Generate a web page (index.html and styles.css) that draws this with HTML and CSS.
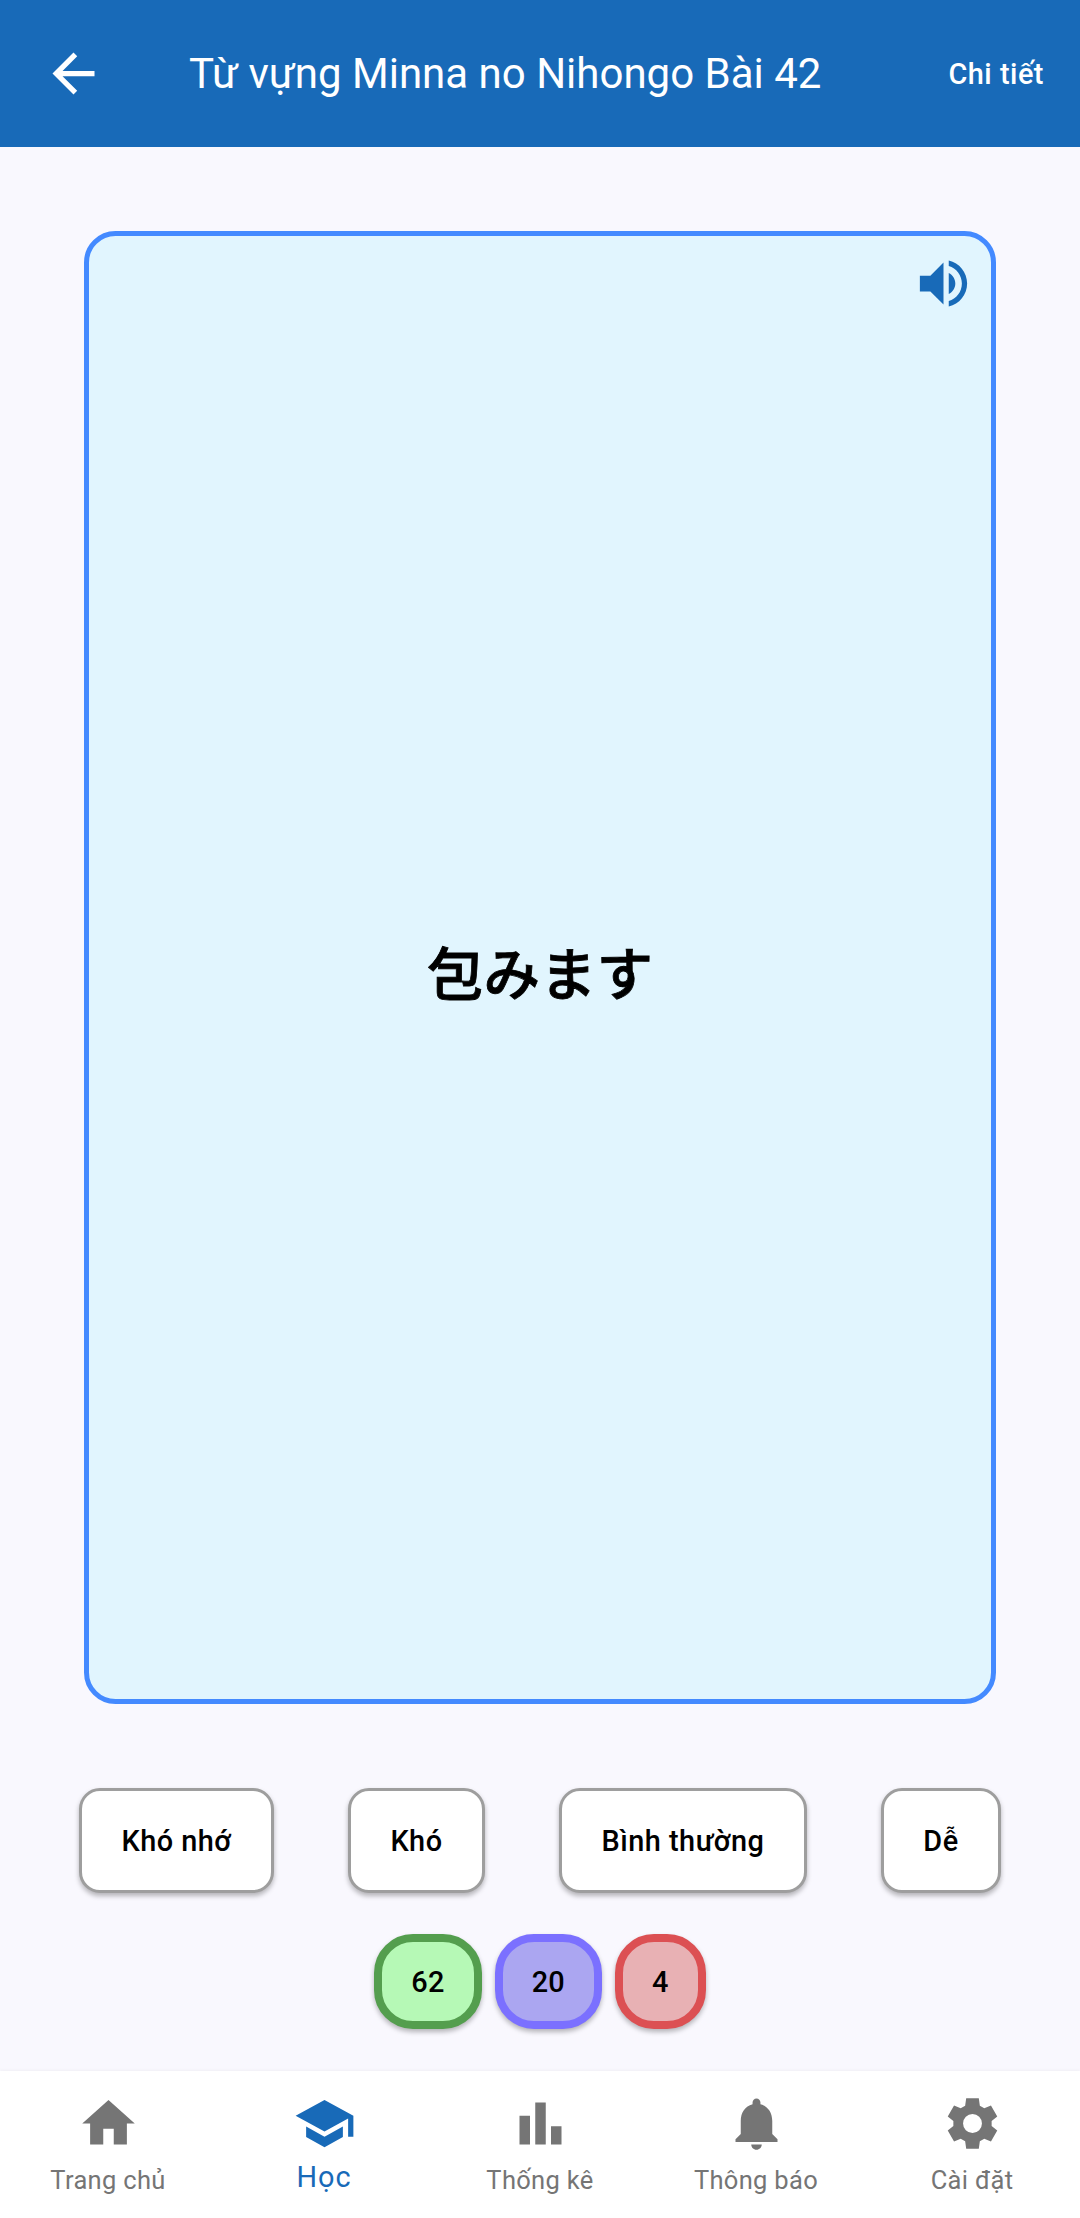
FILE: index.html
```html
<!DOCTYPE html>
<html lang="vi">
<head>
<meta charset="utf-8">
<title>Từ vựng Minna no Nihongo Bài 42</title>
<link rel="stylesheet" href="styles.css">
</head>
<body>
<header class="app-bar">
  <svg class="icon" viewBox="0 0 24 24"><path d="M20 11H7.83l5.59-5.59L12 4l-8 8 8 8 1.41-1.41L7.83 13H20v-2z"/></svg>
  <h1 class="title">Từ vựng Minna no Nihongo Bài 42</h1>
  <a class="detail">Chi tiết</a>
</header>
<main class="study">
  <section class="card">
    <svg class="icon speaker" viewBox="0 0 24 24"><path d="M3 9v6h4l5 5V4L7 9H3zm13.500 3c0-1.770-1.020-3.290-2.500-4.030v8.050c1.480-.730 2.500-2.250 2.500-4.020zM14 3.230v2.060c2.890.860 5 3.540 5 6.710s-2.110 5.850-5 6.710v2.060c4.010-.910 7-4.490 7-8.770s-2.990-7.860-7-8.770z"/></svg>
    <p class="word" lang="ja">包みます</p>
  </section>
  <div class="ratings">
    <button class="rate">Khó nhớ</button>
    <button class="rate">Khó</button>
    <button class="rate">Bình thường</button>
    <button class="rate">Dễ</button>
  </div>
  <div class="counts">
    <span class="count count-green">62</span>
    <span class="count count-violet">20</span>
    <span class="count count-red">4</span>
  </div>
</main>
<nav class="tabs">
  <a class="tab"><svg class="icon" viewBox="0 0 24 24"><path d="M10 20v-6h4v6h5v-8h3L12 3 2 12h3v8z"/></svg><span>Trang chủ</span></a>
  <a class="tab active"><svg class="icon" viewBox="0 0 24 24"><path d="M5 13.180v4L12 21l7-3.820v-4L12 17l-7-3.820zM12 3L1 9l11 6 9-4.910V17h2V9L12 3z"/></svg><span>Học</span></a>
  <a class="tab"><svg class="icon" viewBox="0 0 24 24"><path d="M4 9h4v11H4zM16 13h4v7h-4zM10 4h4v16h-4z"/></svg><span>Thống kê</span></a>
  <a class="tab"><svg class="icon" viewBox="0 0 24 24"><path d="M12 22c1.100 0 2-.900 2-2h-4c0 1.100.890 2 2 2zm6-6v-5c0-3.070-1.640-5.640-4.500-6.320V4c0-.830-.670-1.500-1.500-1.500s-1.500.670-1.500 1.500v.680C7.630 5.360 6 7.920 6 11v5l-2 2v1h16v-1l-2-2z"/></svg><span>Thông báo</span></a>
  <a class="tab"><svg class="icon" viewBox="0 0 24 24"><path fill-rule="evenodd" d="M9.600 2.400H14.400L14.800 5.200 16.490 6.180 19.030 5.170 21.430 9.330 19.290 11.020V12.980L21.430 14.670 19.030 18.830 16.490 17.820 14.800 18.800 14.400 21.600H9.600L9.200 18.800 7.510 17.820 4.970 18.830 2.570 14.670 4.710 12.980V11.020L2.570 9.330 4.970 5.170 7.510 6.180 9.200 5.200zM12 8.400a3.600 3.600 0 1 0 0 7.200 3.600 3.600 0 1 0 0-7.200z"/></svg><span>Cài đặt</span></a>
</nav>
</body>
</html>
```
FILE: styles.css
```css
* { box-sizing: border-box; }
body {
  margin: 0;
  height: 2218px;
  display: flex;
  flex-direction: column;
  background: #f9f8fe;
  font-family: Roboto, "Noto Sans", sans-serif;
  color: #000;
}
.icon { display: block; width: 63px; height: 63px; fill: currentColor; flex: none; }

.app-bar {
  height: 147px;
  display: flex;
  align-items: center;
  padding: 0 36px 0 42px;
  background: #186ab8;
  color: #fff;
}
.title {
  margin: 0 0 0 84px;
  padding-top: 1px;
  font-size: 42px;
  font-weight: 400;
  line-height: 50px;
  white-space: nowrap;
}
.detail { margin-left: auto; font-size: 28.875px; font-weight: 500; letter-spacing: 0.520px; white-space: nowrap; }

.study { flex: 1; display: flex; flex-direction: column; padding-top: 84px; }
.card {
  height: 1472.500px;
  margin: 0 84px;
  border: 5.250px solid #448aff;
  border-radius: 31.500px;
  background: #e1f5fe;
  position: relative;
  display: flex;
  align-items: center;
  justify-content: center;
}
.speaker { position: absolute; top: 16px; right: 16px; color: #186ab8; }
.word {
  margin: 0;
  padding-top: 5px;
  font-family: "Noto Sans CJK JP", sans-serif;
  font-size: 56.500px;
  font-weight: 500;
  -webkit-text-stroke: 0.800px #000;
  line-height: 84px;
}
.ratings { display: flex; justify-content: space-between; margin-top: 84px; padding: 0 79px; }
.rate {
  height: 105px;
  padding: 2px 39.400px 0;
  border: 3px solid #9e9e9e;
  border-radius: 21px;
  background: #fff;
  color: #000;
  font: 500 28.875px Roboto, "Noto Sans", sans-serif;
  letter-spacing: 0.500px;
  white-space: nowrap;
  box-shadow: 0 3px 5px rgba(0, 0, 0, 0.28);
}
.counts { display: flex; justify-content: center; gap: 13px; margin-top: 41.500px; }
.count {
  height: 95px;
  padding: 0 29px;
  display: flex;
  align-items: center;
  border: 8px solid;
  border-radius: 39px;
  font-size: 28.875px;
  font-weight: 500;
  letter-spacing: 0.260px;
  box-shadow: 0 3px 5px rgba(0, 0, 0, 0.28);
}
.count-green { background-color: #b6f9b6; border-color: #549e4e; }
.count-violet { background-color: #aba6f1; border-color: #7b70ff; }
.count-red { background-color: #e8b1b4; border-color: #dc5053; }

.tabs {
  height: 147px;
  display: grid;
  grid-template-columns: repeat(5, 1fr);
  background: #fff;
  color: #757575;
  box-shadow: 0 -1px 3px rgba(0, 0, 0, 0.04);
}
.tab {
  display: flex;
  flex-direction: column;
  align-items: center;
  padding-top: 21px;
  font-size: 25.500px;
  line-height: 36px;
  letter-spacing: 0.320px;
  white-space: nowrap;
}
.tab span { margin-top: 7px; }
.active { color: #186ab8; font-size: 28.875px; letter-spacing: 0.900px; }
.active span { margin-top: 4px; }
```
